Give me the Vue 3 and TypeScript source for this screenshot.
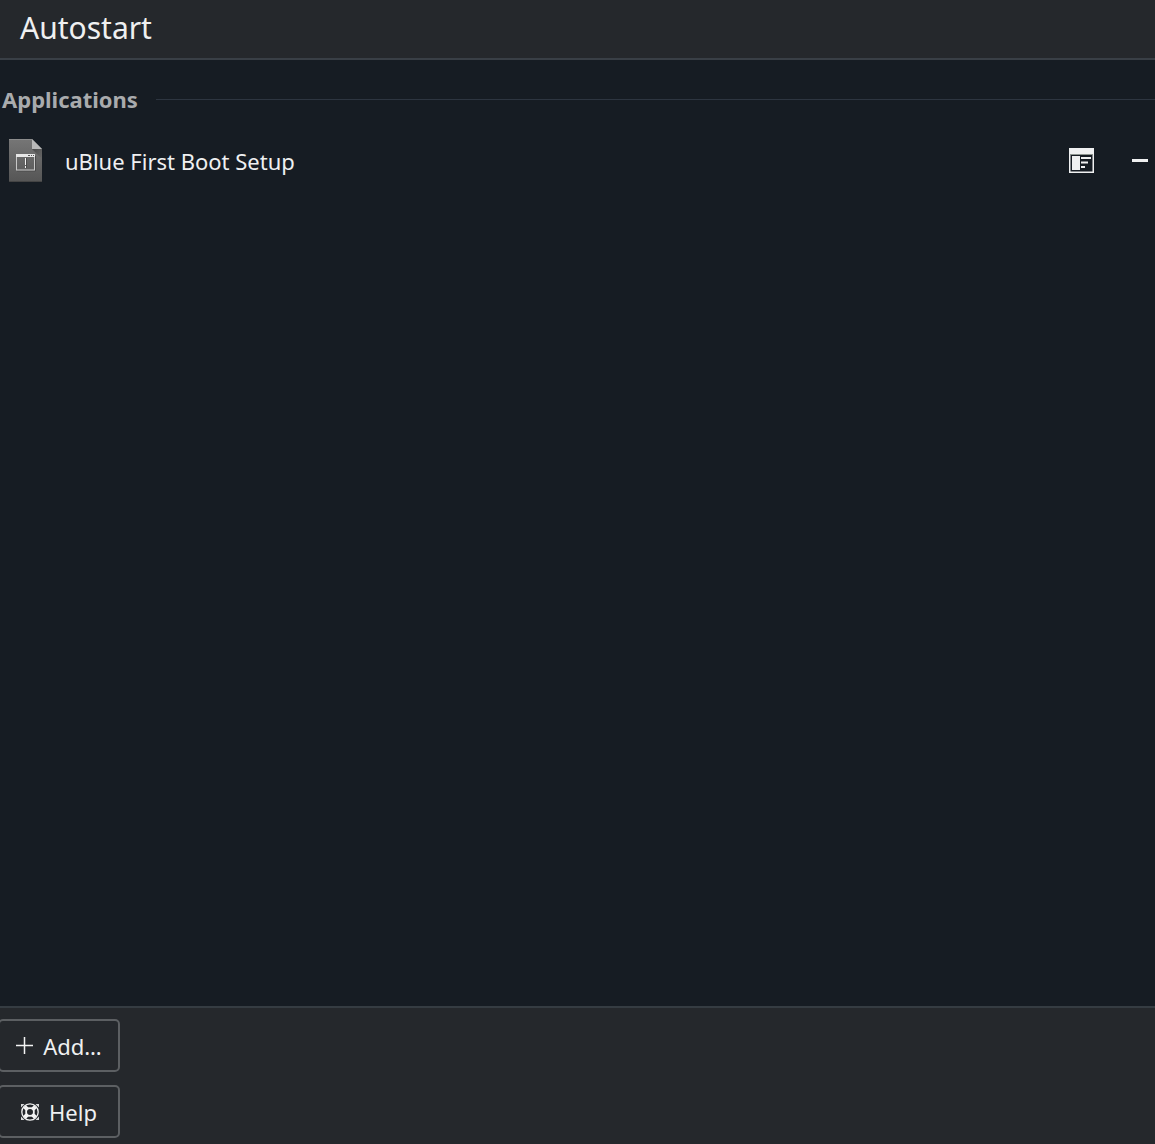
<script setup lang="ts">
interface AutostartEntry {
  id: string
  name: string
}

const entries: AutostartEntry[] = [
  { id: 'ublue-firstboot', name: 'uBlue First Boot Setup' },
]
</script>

<template>
  <div class="page">
    <header class="header">
      <h1>Autostart</h1>
    </header>

    <main class="content">
      <div class="section">
        <h2>Applications</h2>
        <span class="rule"></span>
      </div>
      <ul class="list">
        <li v-for="entry in entries" :key="entry.id" class="row">
          <svg class="file-icon" width="33" height="43" viewBox="0 0 33 43" aria-hidden="true">
            <defs>
              <linearGradient id="sheet" x1="0" y1="0" x2="0" y2="1">
                <stop offset="0" stop-color="#767676" />
                <stop offset="1" stop-color="#555555" />
              </linearGradient>
              <linearGradient id="fold-shade" x1="0" y1="0" x2="1" y2="1">
                <stop offset="0" stop-color="#484848" />
                <stop offset="1" stop-color="#484848" stop-opacity="0" />
              </linearGradient>
            </defs>
            <path d="M0 0H23L33 10V43H0Z" fill="url(#sheet)" />
            <path d="M0 .5H23" stroke="#8c8c8c" />
            <path d="M0 42.500H33" stroke="#444444" />
            <path d="M23 10L33 20V10Z" fill="url(#fold-shade)" />
            <path d="M23 0V10H33Z" fill="#b9b9b9" />
            <path d="M8 32H26.500V17" fill="none" stroke="#4a4a4a" />
            <rect x="7.500" y="16.500" width="18" height="14.500" fill="none" stroke="#c8c8c8" />
            <path d="M7 15H26V18H7Z" fill="#e6e6e6" />
            <path d="M19 16H21V17H19ZM22 16H23V17H22ZM24 16H25V17H24Z" fill="#555555" />
            <path d="M16 19H17V26H16ZM16 27H17V29H16Z" fill="#f2f2f2" />
            <path d="M17 19H18V29H17Z" fill="#4b4b4b" />
          </svg>
          <span class="name">{{ entry.name }}</span>
          <button class="tool" type="button" aria-label="See properties">
            <svg width="25" height="25" viewBox="0 0 25 25" aria-hidden="true">
              <path d="M.75 .75H24.250V24.250H.75Z" fill="none" stroke="#eff0f1" stroke-width="1.500" />
              <path d="M1 1H24V6H1Z" fill="#eff0f1" />
              <path d="M1 6.500H24" stroke="#8d948f" />
              <path d="M3 8H11V22H3Z" fill="#eff0f1" />
              <path d="M12 10H22M12 14.500H19M12 19H16" stroke="#eff0f1" stroke-width="1.800" />
            </svg>
          </button>
          <button class="tool" type="button" aria-label="Remove entry">
            <svg width="16" height="25" viewBox="0 0 16 25" aria-hidden="true">
              <path d="M0 11H16V14H0Z" fill="#eff0f1" />
            </svg>
          </button>
        </li>
      </ul>
    </main>

    <footer class="footer">
      <button class="action" type="button">
        <svg width="17" height="17" viewBox="0 0 17 17" aria-hidden="true">
          <path d="M0 8.500H17M8.500 0V17" stroke="#f4f4f4" stroke-width="1.500" />
        </svg>
        Add…
      </button>
      <button class="action" type="button">
        <svg width="18" height="18" viewBox="0 0 18 18" aria-hidden="true">
          <g fill="none" stroke="#f4f4f4">
            <circle cx="9" cy="9" r="8.200" stroke-width="1.300" />
            <circle cx="9" cy="9" r="3.900" stroke-width="1.800" />
            <path d="M3.600 3.600L6.500 6.500M11.500 11.500L14.400 14.400M14.400 3.600L11.500 6.500M6.500 11.500L3.600 14.400" stroke-width="4" />
          </g>
          <path
            d="M0 1H3.500L0 4.500ZM18 1H14.500L18 4.500ZM0 17H3.500L0 13.500ZM18 17H14.500L18 13.500Z"
            fill="#d8d9da"
          />
        </svg>
        Help
      </button>
    </footer>
  </div>
</template>

<style>
body {
  margin: 0;
  background: #161c23;
}
</style>

<style scoped>
.page {
  display: flex;
  flex-direction: column;
  min-height: 100vh;
  background: #161c23;
  color: #eff0f1;
  font-family: "Noto Sans", sans-serif;
  font-size: 22px;
  line-height: 32px;
}

h1,
h2 {
  margin: 0;
}

.header {
  padding: 8px 20px 10px;
  background: #25282c;
  border-bottom: 2px solid #393f46;
}

h1 {
  font-size: 30px;
  font-weight: 400;
  line-height: 40px;
}

.content {
  flex: 1;
}

.section {
  display: flex;
  align-items: center;
  gap: 18px;
  padding: 23px 0 0 2px;
}

h2 {
  color: #a9abad;
  font-size: 22px;
  font-weight: 700;
  line-height: 32px;
}

.rule {
  flex: 1;
  height: 1px;
  background: #2d3540;
}

.list {
  margin: 0;
  padding: 0;
  list-style: none;
}

.row {
  display: flex;
  align-items: center;
  padding: 24px 7px 24px 9px;
}

.name {
  flex: 1;
  margin-left: 23px;
}

.tool {
  display: flex;
  margin: 0 0 0 38px;
  padding: 0;
  border: 0;
  background: none;
}

.footer {
  display: flex;
  flex-direction: column;
  align-items: flex-start;
  gap: 13px;
  padding: 11px 0 6px;
  background: #25282c;
  border-top: 2px solid #353c42;
}

.action {
  display: flex;
  align-items: center;
  justify-content: center;
  gap: 10px;
  box-sizing: border-box;
  width: 122px;
  height: 53px;
  margin-left: -2px;
  padding: 0;
  border: 2px solid #5c5f62;
  border-radius: 5px;
  background: #25282c;
  color: inherit;
  font: inherit;
}
</style>
